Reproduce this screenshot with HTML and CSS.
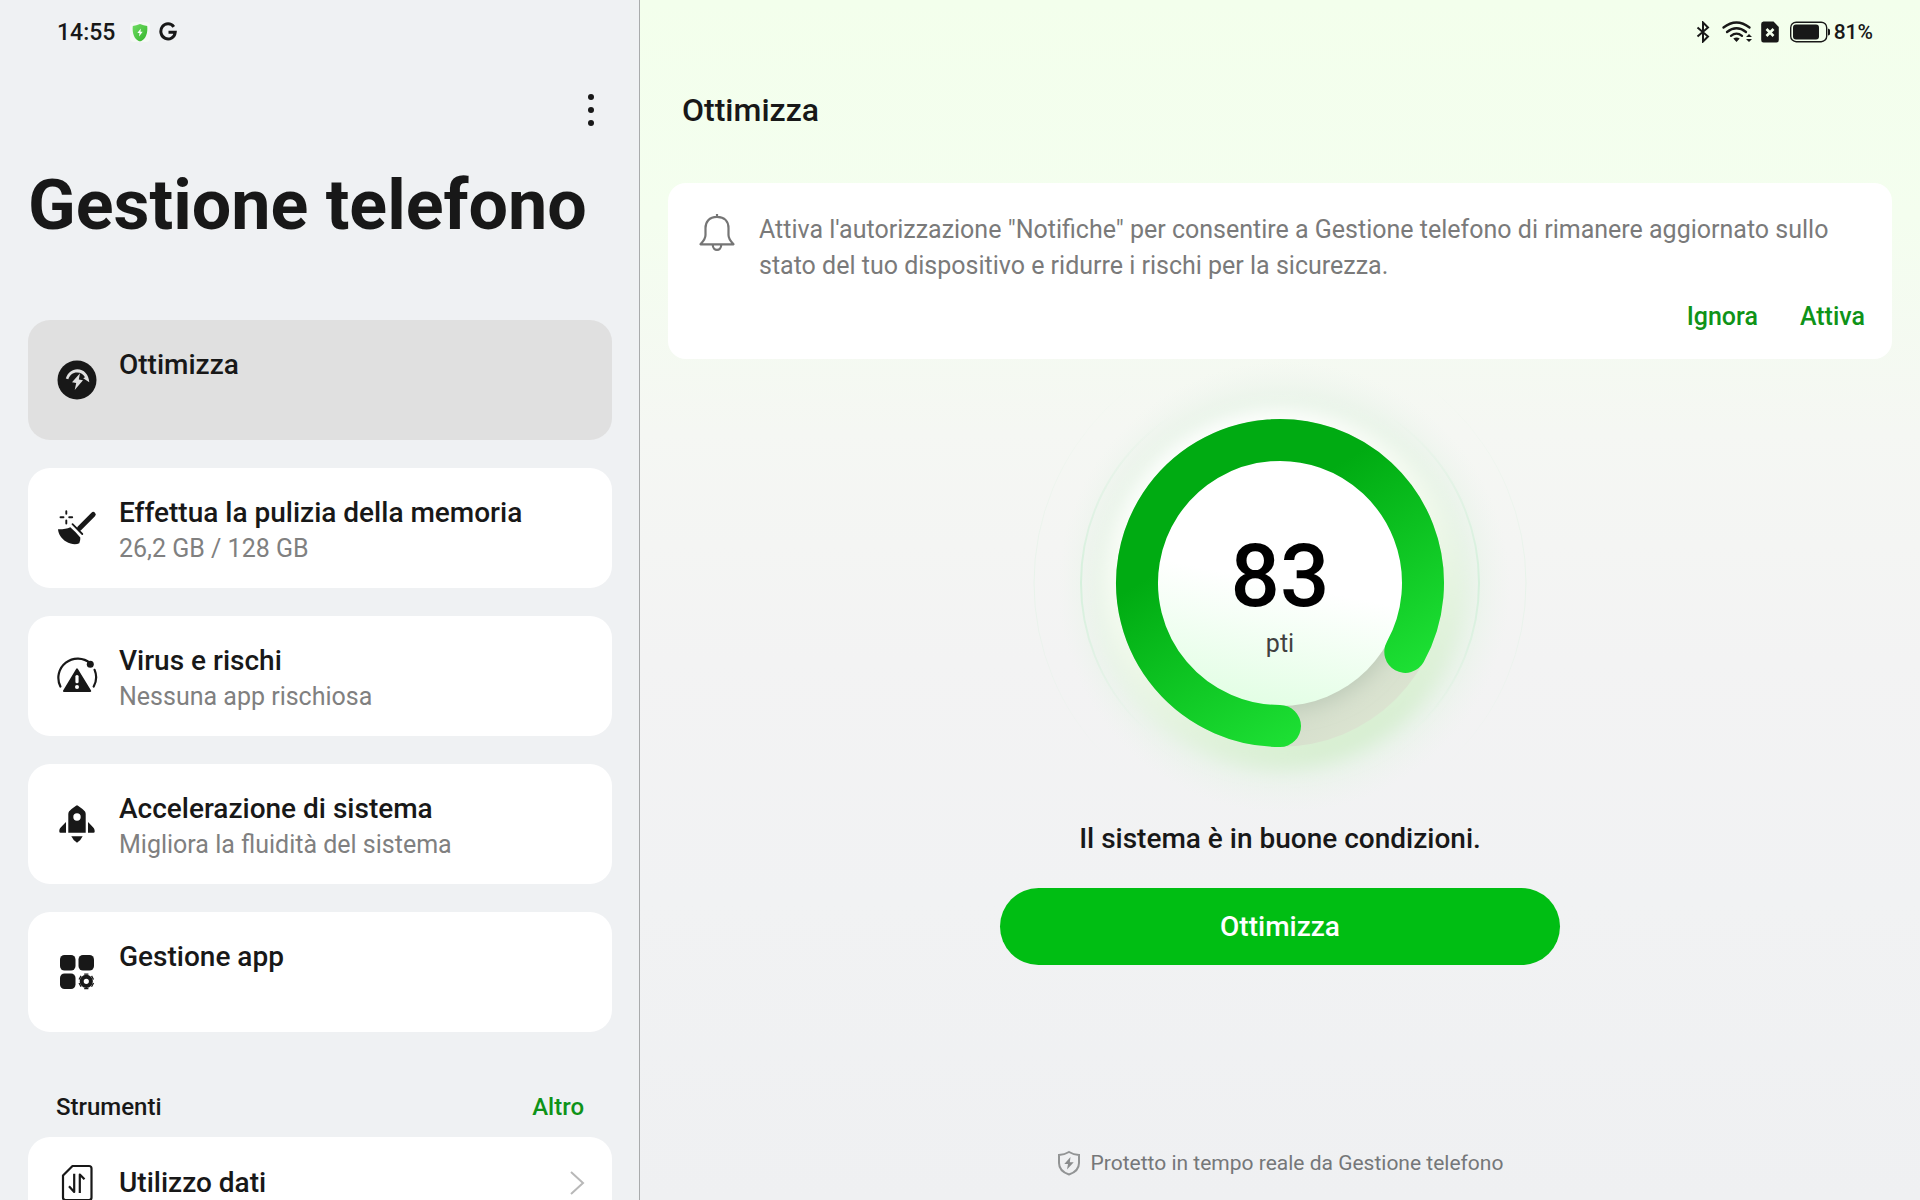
FILE: index.html
```html
<!DOCTYPE html>
<html lang="it">
<head>
    <meta charset="UTF-8">
    <meta name="viewport" content="width=device-width, initial-scale=1.0">
    <title>Gestione telefono</title>
    <link rel="stylesheet" href="styles.css">
</head>
<body>
    <div class="app">
        <aside class="sidebar">
            <div class="status status-left">
                <span class="time">14:55</span>
                <svg class="status-shield" width="20" height="20" viewBox="0 0 20 20" aria-hidden="true">
                    <defs>
                        <linearGradient id="shieldFill" x1="0" y1="0" x2="1" y2="1">
                            <stop offset="0" stop-color="#6fdc62"/>
                            <stop offset="1" stop-color="#35b52a"/>
                        </linearGradient>
                    </defs>
                    <rect width="20" height="20" rx="4" fill="#f5f8f5"/>
                    <path d="M10 2C12.500 3.100 14.900 3.700 17.200 4C18 11 15.800 16.800 11.300 19Q10 19.600 8.700 19C4.200 16.800 2 11 2.800 4C5.100 3.700 7.500 3.100 10 2Z" fill="url(#shieldFill)"/>
                    <path d="M10.800 6.500L7.300 11H9.500L9 14.500L12.700 9.800H10.500Z" fill="#fff"/>
                </svg>
                <svg width="18" height="20" viewBox="0 0 18 20" aria-hidden="true">
                    <path d="M14.800 4.800A7.200 7.600 0 1 0 16.200 10.300H9.500" fill="none" stroke="#181818" stroke-width="3"/>
                </svg>
            </div>
            <div class="toolbar toolbar-left">
                <button class="menu-button" aria-label="Altre opzioni">
                    <svg width="8" height="34" viewBox="0 0 8 34"><circle cx="4" cy="4" r="3"/><circle cx="4" cy="17" r="3"/><circle cx="4" cy="30" r="3"/></svg>
                </button>
            </div>
            <h1>Gestione telefono</h1>
            <nav class="menu">
                <a href="#ottimizza" class="item active">
                    <svg class="icon" viewBox="0 0 44 44">
                        <circle cx="22" cy="22" r="19.500"/>
                        <path class="cut" d="M10.800 20.400C12.700 14.700 17 11.200 22.300 11.200C29 11.200 33.800 16.500 34.300 24.300L28.200 20.300L30 19.300C28.400 16.300 25.700 14.500 22 14.500C17.800 14.500 14.800 17 13.300 21.300Z"/>
                        <path class="cut" d="M25 15.300L17 24.300L21.200 25L19.700 32L28 22.300L23.800 21.500Z"/>
                    </svg>
                    <span class="texts"><span class="name">Ottimizza</span></span>
                </a>
                <a href="#pulizia" class="item">
                    <svg class="icon" viewBox="0 0 44 44">
                        <path d="M24.500 22.200L38.200 8.500" fill="none" stroke="#181818" stroke-width="5" stroke-linecap="round"/>
                        <path d="M17.500 18.200L27.300 28" fill="none" stroke="#181818" stroke-width="1.800" stroke-linecap="round"/>
                        <path d="M3 23.200C8 23.300 12 22.700 15.300 21.200Q20.500 25.500 25.300 31.600Q25.600 34.500 24.300 37.200C21 38.800 16 38.500 11 35.500C6.500 32.500 3.500 28.500 3 23.200Z"/>
                        <path d="M5.500 11.300H8.500M14.200 11.300H17.200M11.300 5.300V7.800M11.300 14.500V17.500" fill="none" stroke="#181818" stroke-width="1.900" stroke-linecap="round"/>
                    </svg>
                    <span class="texts"><span class="name">Effettua la pulizia della memoria</span><span class="sub">26,2 GB / 128 GB</span></span>
                </a>
                <a href="#virus" class="item">
                    <svg class="icon" viewBox="0 0 44 44">
                        <path d="M5.400 32.500A19.300 19.300 0 0 1 35.300 9.300M39.600 15.800A19.300 19.300 0 0 1 38.700 32.500" fill="none" stroke="#181818" stroke-width="2.200" stroke-linecap="round"/>
                        <circle cx="35.300" cy="10.300" r="3.500"/>
                        <path d="M22 15.200L35.300 37H8.900Z" stroke="#181818" stroke-width="1.800" stroke-linejoin="round"/>
                        <rect x="20.400" y="21" width="3.200" height="8.200" rx="1.500" fill="#fff"/>
                        <circle cx="22" cy="33" r="2" fill="#fff"/>
                    </svg>
                    <span class="texts"><span class="name">Virus e rischi</span><span class="sub">Nessuna app rischiosa</span></span>
                </a>
                <a href="#accelerazione" class="item">
                    <svg class="icon" viewBox="0 0 44 44">
                        <path fill-rule="evenodd" d="M21 3.700Q22 3 23 3.700Q28 7 30 9.500Q30.700 10.500 30.700 12V30.700H13.300V12Q13.300 10.500 14 9.500Q16 7 21 3.700ZM22 11.300A3.700 3.700 0 1 0 22 18.700A3.700 3.700 0 1 0 22 11.300Z"/>
                        <path d="M11 20V30.700H5.500Q4.300 30.700 4.300 29.500C4.300 26 6 25.300 11 20ZM33 20V30.700H38.500Q39.700 30.700 39.700 29.500C39.700 26 38 25.300 33 20Z"/>
                        <path d="M16.300 34.200H27.700Q26 38 22 40.800Q18 38 16.300 34.200Z"/>
                    </svg>
                    <span class="texts"><span class="name">Accelerazione di sistema</span><span class="sub">Migliora la fluidità del sistema</span></span>
                </a>
                <a href="#app" class="item">
                    <svg class="icon" viewBox="0 0 44 44">
                        <rect x="5" y="5" width="15.500" height="15.500" rx="4.500"/>
                        <rect x="23.500" y="5" width="15.500" height="15.500" rx="4.500"/>
                        <rect x="5" y="23.500" width="15.500" height="15.500" rx="4.500"/>
                        <circle cx="31.300" cy="31.300" r="4.600" fill="none" stroke="#181818" stroke-width="4"/>
                        <path d="M31.300 24.700V23.400M31.300 37.900V39.200M25.600 28L24.500 27.400M37 34.600L38.100 35.200M25.600 34.600L24.500 35.200M37 28L38.100 27.400" fill="none" stroke="#181818" stroke-width="4.200"/>
                    </svg>
                    <span class="texts"><span class="name">Gestione app</span></span>
                </a>
            </nav>
            <div class="section-head">
                <h2>Strumenti</h2>
                <a href="#altro">Altro</a>
            </div>
            <div class="tools">
                <a href="#dati" class="tool">
                    <svg class="icon" viewBox="0 0 44 44">
                        <g fill="none" stroke="#181818" stroke-width="2.200" stroke-linejoin="round">
                            <path d="M17.500 5H34Q36.500 5 36.500 7.500V36.500Q36.500 39 34 39H10.500Q8 39 8 36.500V14.500Z"/>
                            <path d="M19.200 12.700V31L14 25.300M24.800 32V13.500L29.500 18.300"/>
                        </g>
                    </svg>
                    <span class="name">Utilizzo dati</span>
                    <svg class="chevron" width="16" height="26" viewBox="0 0 16 26"><path d="M2 2L14 13L2 24"/></svg>
                </a>
            </div>
        </aside>

        <main class="content">
            <div class="status status-right">
                <svg width="14" height="22" viewBox="0 0 14 22" aria-label="Bluetooth">
                    <path d="M1.500 6.500L12 15.500L7 20.500V1.500L12 6.500L1.500 15.500" fill="none" stroke="#181818" stroke-width="2"/>
                </svg>
                <svg class="wifi" width="30" height="22" viewBox="0 0 30 22" aria-label="Wi-Fi">
                    <g fill="none" stroke="#181818" stroke-width="2.300" stroke-linecap="round">
                        <path d="M1.500 6.500Q14.500 -3.500 27.500 6.500"/>
                        <path d="M5 11Q14.500 3.500 24 11"/>
                        <path d="M9 14.800Q14.500 10.500 20 14.800"/>
                    </g>
                    <path d="M11.300 17.500Q14.500 15.500 17.700 17.500L14.500 21ZM24 16L27 13L30 16ZM24 18L27 21L30 18Z"/>
                </svg>
                <svg class="sim" width="18" height="22" viewBox="0 0 18 22" aria-label="Nessuna SIM">
                    <path d="M2.500 0.500H12.500L17.800 6V19Q17.800 21.500 15.500 21.500H2.500Q0.200 21.500 0.200 19V3Q0.200 0.500 2.500 0.500Z"/>
                    <path d="M5.500 8L12.500 15M12.500 8L5.500 15" stroke="#f4ffed" stroke-width="2.600"/>
                </svg>
                <svg class="battery" width="40" height="22" viewBox="0 0 40 22" aria-label="Batteria">
                    <rect x="0.700" y="1.200" width="36" height="19.500" rx="5.500" fill="none" stroke="#181818" stroke-width="1.400"/>
                    <rect x="3" y="3.500" width="26" height="15" rx="3"/>
                    <path d="M38 7.500Q40 8 40 9V13Q40 14 38 14.500Z"/>
                </svg>
                <span class="percent">81%</span>
            </div>
            <div class="toolbar">
                <h2 class="page-title">Ottimizza</h2>
            </div>

            <section class="notice">
                <svg class="bell" width="40" height="40" viewBox="0 0 40 40">
                    <g fill="none" stroke="#757575" stroke-width="2.200" stroke-linejoin="round">
                        <path d="M20 4.800C28 4.800 31.500 10 31.500 16V23C31.500 27 33.500 29 36.500 32.300H3.500C6.500 29 8.500 27 8.500 23V16C8.500 10 12 4.800 20 4.800ZM20 2V5"/>
                        <path d="M15.800 33C15.800 39.500 24.200 39.500 24.200 33"/>
                    </g>
                </svg>
                <p>Attiva l'autorizzazione "Notifiche" per consentire a Gestione telefono di rimanere aggiornato sullo stato del tuo dispositivo e ridurre i rischi per la sicurezza.</p>
                <div class="notice-actions">
                    <button>Ignora</button>
                    <button>Attiva</button>
                </div>
            </section>

            <section class="score">
                <div class="gauge">
                    <svg class="gauge-ring" viewBox="0 0 520 520" aria-hidden="true">
                        <defs>
                            <linearGradient id="arc" gradientUnits="userSpaceOnUse" x1="334" y1="384" x2="223" y2="198">
                                <stop offset="0" stop-color="#1de034"/>
                                <stop offset="1" stop-color="#00ab12"/>
                            </linearGradient>
                            <linearGradient id="disc" x1="0.600" y1="0" x2="0.400" y2="1">
                                <stop offset="0.500" stop-color="#ffffff"/>
                                <stop offset="1" stop-color="#e2fee4"/>
                            </linearGradient>
                            <linearGradient id="halo" x1="0.200" y1="0.100" x2="0.600" y2="1">
                                <stop offset="0" stop-color="#ffffff"/>
                                <stop offset="0.450" stop-color="#f1f9ec"/>
                                <stop offset="1" stop-color="#d6eed0"/>
                            </linearGradient>
                            <radialGradient id="mist">
                                <stop offset="0.720" stop-color="#e2f1e2"/>
                                <stop offset="0.820" stop-color="#e6f3e6" stop-opacity="0.800"/>
                                <stop offset="1" stop-color="#edf4ee" stop-opacity="0"/>
                            </radialGradient>
                            <linearGradient id="rim" x1="0" y1="0" x2="0" y2="1">
                                <stop offset="0.080" stop-color="#d5f0dc" stop-opacity="0"/>
                                <stop offset="0.500" stop-color="#d5f0dc"/>
                                <stop offset="0.880" stop-color="#d5f0dc" stop-opacity="0"/>
                            </linearGradient>
                            <linearGradient id="track" x1="0.300" y1="0.300" x2="0.800" y2="0.950">
                                <stop offset="0.600" stop-color="#cdd8c6"/>
                                <stop offset="1" stop-color="#dde5d2"/>
                            </linearGradient>
                            <filter id="soft" x="-30%" y="-30%" width="160%" height="160%"><feGaussianBlur stdDeviation="9"/></filter>
                            <filter id="shade" x="-30%" y="-30%" width="160%" height="160%"><feGaussianBlur stdDeviation="10"/></filter>
                            <clipPath id="trackClip"><circle cx="260" cy="260" r="164"/></clipPath>
                        </defs>
                        <circle cx="260" cy="260" r="246" fill="none" stroke="url(#rim)" stroke-opacity="0.400"/>
                        <circle cx="264" cy="264" r="226" fill="url(#mist)"/>
                        <circle cx="260" cy="260" r="199" fill="none" stroke="url(#rim)" stroke-width="2"/>
                        <circle cx="262" cy="265" r="179" fill="url(#halo)" filter="url(#soft)"/>
                        <circle cx="260" cy="260" r="164" fill="url(#track)"/>
                        <g clip-path="url(#trackClip)">
                            <circle cx="263" cy="264" r="122" fill="#bdcab8" filter="url(#shade)"/>
                        </g>
                        <circle cx="260" cy="260" r="123" fill="url(#disc)"/>
                        <path d="M260 403A143 143 0 1 1 385.300 328.900" fill="none" stroke="url(#arc)" stroke-width="42" stroke-linecap="round"/>
                    </svg>
                    <div class="gauge-label">
                        <strong>83</strong>
                        <span>pti</span>
                    </div>
                </div>
                <p class="condition">Il sistema è in buone condizioni.</p>
                <button class="optimize">Ottimizza</button>
            </section>

            <footer class="protected">
                <svg width="24" height="26" viewBox="0 0 24 26">
                    <path d="M12 2C15 3.800 18.500 4.700 22 5V13C22 18.500 18 22.500 12 24.500C6 22.500 2 18.500 2 13V5C5.500 4.700 9 3.800 12 2Z" fill="none" stroke="#929495" stroke-width="2"/>
                    <path d="M13.500 7L7.300 14H11L10 19.500L16.700 12.300H12.800Z" fill="#8a8c8d"/>
                </svg>
                <span>Protetto in tempo reale da Gestione telefono</span>
            </footer>
        </main>
    </div>
</body>
</html>
```
FILE: styles.css
```css
*{
    box-sizing: border-box;
    margin: 0;
    padding: 0;
}
body{
    font-family: Roboto, "Noto Sans", sans-serif;
    font-weight: 500;
    color: #181818;
    background: #eff1f3;
}
a{
    color: inherit;
    text-decoration: none;
}
button{
    border: none;
    background: none;
    font: inherit;
    color: inherit;
    cursor: pointer;
}
svg{
    display: block;
    flex-shrink: 0;
    fill: #181818;
}
.app{
    display: grid;
    grid-template-columns: 1fr 2fr;
    height: 100vh;
    overflow: hidden;
}

/* barra di stato */
.status{
    display: flex;
    align-items: center;
    height: 64px;
}
.status-left{
    padding-left: 29px;
}
.time{
    font-size: 23px;
}
.status-shield{
    margin: 0 9px 0 15px;
}
.status-right{
    justify-content: flex-end;
    padding-right: 19px;
}
.wifi{
    margin-left: 12px;
}
.sim{
    margin-left: 9px;
}
.battery{
    margin: 0 4px 0 11px;
}
.percent{
    font-size: 21px;
}
.toolbar{
    display: flex;
    align-items: center;
    height: 92px;
}

/* colonna sinistra */
.sidebar{
    overflow: hidden;
    padding: 0 27px 0 28px;
    border-right: 1px solid #a9abac;
    background: #eff1f3;
}
.toolbar-left{
    justify-content: flex-end;
}
.menu-button{
    padding: 8px 17px;
}
h1{
    padding-top: 1px;
    font-size: 70px;
    font-weight: 700;
    line-height: 96px;
    white-space: nowrap;
}
.menu{
    display: flex;
    flex-direction: column;
    gap: 28px;
    margin-top: 67px;
}
.item{
    display: flex;
    align-items: center;
    gap: 20px;
    min-height: 120px;
    padding: 0 27px;
    border-radius: 22px;
    background: #fff;
}
.item.active{
    background: #e0e0e0;
}
.icon{
    width: 44px;
    height: 44px;
}
.cut{
    fill: #e0e0e0;
}
.texts{
    display: flex;
    flex-direction: column;
    align-self: flex-start;
    padding-top: 27px;
    line-height: 36px;
}
.name{
    font-size: 28px;
}
.sub{
    font-size: 25px;
    font-weight: 400;
    color: #808080;
}
.section-head{
    display: flex;
    justify-content: space-between;
    margin-top: 57px;
    padding: 0 28px;
    font-size: 24px;
    line-height: 36px;
}
.section-head h2{
    font-size: 24px;
    font-weight: 500;
}
.section-head a{
    color: #0f9318;
}
.tools{
    margin-top: 12px;
    border-radius: 22px;
    background: #fff;
}
.tool{
    display: flex;
    align-items: center;
    gap: 20px;
    height: 91px;
    padding: 0 27px;
}
.chevron{
    margin-left: auto;
    fill: none;
    stroke: #b8b8b8;
    stroke-width: 2;
}

/* pannello destro */
.content{
    display: flex;
    flex-direction: column;
    padding: 0 28px;
    background: linear-gradient(#f3ffec 0%, #f4feef 18%, #f5f7f3 36%, #f3f3f3 55%, #f1f2f3 75%, #eff0f2 100%);
}
.page-title{
    padding-left: 14px;
    font-size: 32px;
    font-weight: 500;
}
.notice{
    position: relative;
    z-index: 1;
    display: grid;
    grid-template-columns: 40px 1fr;
    column-gap: 22px;
    margin-top: 27px;
    padding: 29px 27px 24px 29px;
    border-radius: 18px;
    background: #fff;
}
.notice p{
    padding-right: 24px;
    font-size: 25px;
    font-weight: 400;
    line-height: 36px;
    color: #7a7a7a;
}
.notice-actions{
    grid-column: 1 / -1;
    display: flex;
    justify-content: flex-end;
    gap: 42px;
    margin-top: 15px;
    line-height: 36px;
    font-size: 25px;
    color: #0f9318;
}
.score{
    display: flex;
    flex-direction: column;
    align-items: center;
}
.gauge{
    display: grid;
    place-items: center;
    margin: -36px 0 -22px;
}
.gauge-ring, .gauge-label{
    grid-area: 1 / 1;
}
.gauge-ring{
    width: 520px;
    height: 520px;
}
.gauge-label{
    display: flex;
    flex-direction: column;
    align-items: center;
    padding-top: 34px;
}
.gauge-label strong{
    font-size: 87px;
    font-weight: 500;
    line-height: 88px;
    color: #000;
}
.gauge-label span{
    font-size: 25px;
    font-weight: 400;
    line-height: 48px;
    color: #404040;
}
.condition{
    font-size: 28px;
    line-height: 36px;
}
.optimize{
    width: 560px;
    max-width: 100%;
    height: 77px;
    margin-top: 31px;
    border-radius: 39px;
    background: #00be13;
    font-size: 28px;
    color: #fff;
}
.protected{
    display: flex;
    justify-content: center;
    align-items: center;
    gap: 10px;
    margin-top: auto;
    padding-bottom: 19px;
    font-size: 21px;
    font-weight: 400;
    line-height: 36px;
    color: #757779;
}
```
